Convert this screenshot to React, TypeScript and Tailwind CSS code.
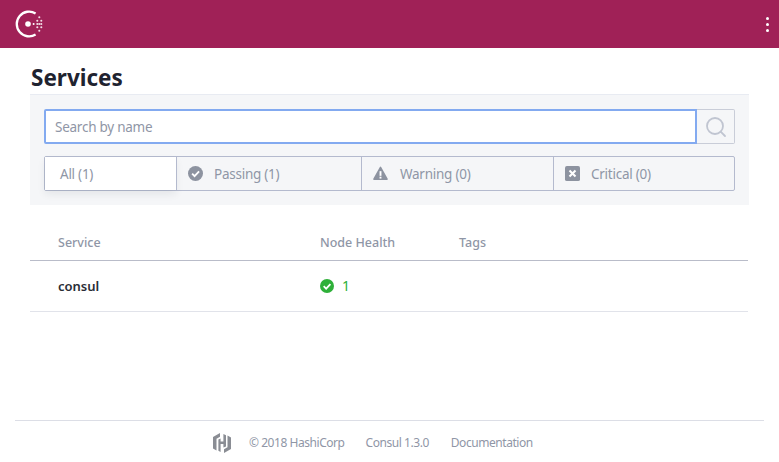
import React from 'react';
import { Search } from 'lucide-react';

const FONT = "font-['Noto_Sans','Open_Sans',sans-serif]";

function ConsulLogo() {
  const dots = [
    [24.3, 7.3], [22.3, 10.7], [26.3, 10.7], [22.3, 14], [26.3, 14], [22.3, 17.3], [26.3, 17.3], [24.3, 20.7], [24.3, 14],
  ];
  return (
    <svg width="30" height="28" viewBox="0 0 30 28" className="block" aria-hidden="true">
      <path d="M20.6 3.4 A12.4 12.4 0 1 0 20.6 24.6" fill="none" stroke="#fff" strokeWidth="2.3" />
      <circle cx="13" cy="14" r="2.8" fill="#fff" />
      <circle cx="18.6" cy="14" r="1" fill="#fff" />
      {dots.map(([cx, cy]) => (
        <circle key={`${cx}-${cy}`} cx={cx} cy={cy} r="1.05" fill="#fff" fillOpacity="0.85" />
      ))}
    </svg>
  );
}

function HashiLogo() {
  return (
    <svg width="20" height="22" viewBox="0 0 20 22" aria-hidden="true" className="block">
      <path d="M8 1 L1 5 V16.5 L4.5 18.5 V6.8 L8 4.8 Z" fill="#8a8d94" />
      <path d="M12 21 L19 17 V5.5 L15.5 3.5 V15.2 L12 17.2 Z" fill="#8a8d94" />
      <path d="M6.4 7.6 L8.6 6.4 V9.6 H11.4 V2 L14 3.2 V14.4 L11.4 15.6 V12 H8.6 V20 L6.4 18.8 Z" fill="#8a8d94" />
    </svg>
  );
}

function FilterTab({ label, width, active, icon, gap }: { label: string; width: string; active?: boolean; icon?: React.ReactNode; gap?: string }) {
  return (
    <div className={`${width} h-full flex items-center ${active ? 'bg-white shadow-[0_4px_8px_rgba(31,38,52,0.08)] pl-[15px]' : 'pl-[11px] border-l border-[#b4bace]'}`}>
      {icon}
      <span className={`text-[13.5px] tracking-[-0.25px] text-[#8f96a6] pt-[2px] ${gap ?? ''}`}>{label}</span>
    </div>
  );
}

export default function App() {
  return (
    <div className={`${FONT} w-[779px] h-[462px] bg-white flex flex-col overflow-hidden`}>
      <header className="h-[48px] bg-[#a02157] flex items-center justify-between pl-[15px] pr-[10px] shrink-0">
        <ConsulLogo />
        <div className="flex flex-col gap-[3px]">
          <span className="w-[3px] h-[3px] bg-white rounded-full" />
          <span className="w-[3px] h-[3px] bg-white rounded-full" />
          <span className="w-[3px] h-[3px] bg-white rounded-full" />
        </div>
      </header>

      <main className="flex-1 px-[30px]">
        <h1 className="text-[22.5px] leading-[32px] font-bold text-[#1f2330] mt-[14px] ml-[1px]">Services</h1>

        <div className="bg-[#f5f6f8] border-t border-[#e8ebf2] px-[14px] py-[14px] h-[111px]">
          <div className="flex h-[35px]">
            <div className="flex-1 bg-white border-2 border-[#83aaf0] rounded-l-[2px] flex items-center pl-[9px] pt-[2px] text-[13.5px] tracking-[-0.25px] text-[#8f96a6]">
              Search by name
            </div>
            <div className="w-[38px] border border-l-0 border-[#c9cdd8] rounded-r-[2px] flex items-center justify-center">
              <Search size={24} strokeWidth={1.8} className="text-[#c0c5d1]" />
            </div>
          </div>
          <div className="flex h-[35px] mt-[12px] border border-[#b4bace] rounded-[2px]">
            <FilterTab label="All (1)" width="w-[131px]" active />
            <FilterTab
              label="Passing (1)"
              width="w-[185px]"
              gap="ml-[11px]"
              icon={
                <svg width="15" height="15" viewBox="0 0 16 16" aria-hidden="true">
                  <circle cx="8" cy="8" r="8" fill="#8d93a0" />
                  <path d="M4.4 8.2 L7 10.8 L11.8 5.8" fill="none" stroke="#fff" strokeWidth="2" />
                </svg>
              }
            />
            <FilterTab
              label="Warning (0)"
              width="w-[192px]"
              gap="ml-[12px]"
              icon={
                <svg width="15" height="15" viewBox="0 0 16 16" aria-hidden="true">
                  <path d="M8 1.5 L15 14 H1 Z" fill="#8d93a0" stroke="#8d93a0" strokeWidth="1.6" strokeLinejoin="round" />
                  <rect x="7" y="5.5" width="2" height="5" fill="#fff" />
                  <rect x="7" y="11.4" width="2" height="2" fill="#fff" />
                </svg>
              }
            />
            <FilterTab
              label="Critical (0)"
              width="flex-1"
              gap="ml-[11px]"
              icon={
                <svg width="15" height="15" viewBox="0 0 16 16" aria-hidden="true">
                  <rect width="16" height="16" rx="2" fill="#8d93a0" />
                  <path d="M4.8 4.8 L11.2 11.2 M11.2 4.8 L4.8 11.2" stroke="#fff" strokeWidth="2.2" />
                </svg>
              }
            />
          </div>
        </div>

        <div className="mt-[21px] mr-[1px] flex items-center h-[35px] border-b border-[#b9bcc9] pl-[28px] text-[12.5px] font-medium text-[#8f96a6]">
          <div className="w-[262px]">Service</div>
          <div className="w-[139px]">Node Health</div>
          <div>Tags</div>
        </div>
        <div className="flex items-center h-[51px] mr-[1px] border-b border-[#e1e3ea] pl-[28px]">
          <div className="w-[262px] pt-[2px] text-[13px] font-semibold text-[#2a2d36]">consul</div>
          <div className="flex items-center gap-[8px] text-[14px] text-[#2eb039]">
            <svg width="14" height="14" viewBox="0 0 16 16" aria-hidden="true">
              <circle cx="8" cy="8" r="8" fill="#2eb039" />
              <path d="M4.2 8.2 L7 11 L11.9 5.8" fill="none" stroke="#fff" strokeWidth="2" />
            </svg>
            <span className="leading-[16px]">1</span>
          </div>
        </div>
      </main>

      <footer className="mx-[15px] h-[42px] border-t border-[#dcdee6] flex items-center pl-[197px] pt-[2px] text-[12px] text-[#8f96a6] shrink-0 tracking-[-0.45px]">
        <HashiLogo />
        <span className="ml-[17px]">© 2018 HashiCorp</span>
        <span className="ml-[21px]">Consul 1.3.0</span>
        <span className="ml-[22px]">Documentation</span>
      </footer>
    </div>
  );
}
